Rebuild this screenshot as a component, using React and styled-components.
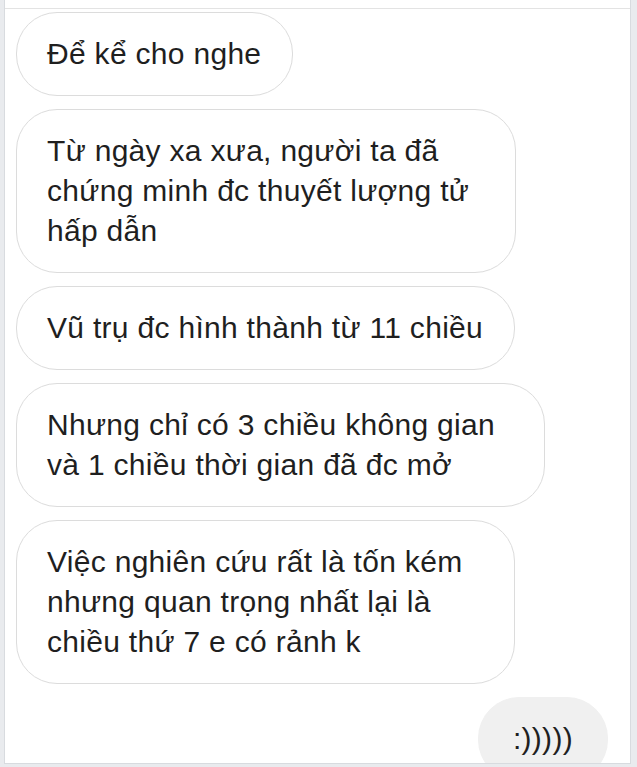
import React from 'react'
import styled, { createGlobalStyle } from 'styled-components'

const GlobalStyle = createGlobalStyle`
  html, body {
    margin: 0;
    padding: 0;
    background: #fff;
  }
  body {
    font-family: "Liberation Sans", Arial, sans-serif;
  }
`

const Frame = styled.div`
  width: 637px;
  height: 767px;
  box-sizing: border-box;
  background: #e9ebee;
  padding: 0 6px 3px 4px;
  display: flex;
  overflow: hidden;
`

const Panel = styled.div`
  flex: 1;
  background: #fff;
  border-left: 1px solid #d8dbdf;
  border-right: 1px solid #d8dbdf;
  border-bottom: 1px solid #d8dbdf;
  display: flex;
  flex-direction: column;
  overflow: hidden;
`

const Header = styled.div`
  height: 8px;
  flex: none;
  border-bottom: 1px solid #e3e3e3;
`

const Thread = styled.div`
  flex: 1;
  display: flex;
  flex-direction: column;
  gap: 13px;
  padding: 3px 22px 0 11px;
`

const Bubble = styled.div`
  align-self: ${props => (props.mine ? 'flex-end' : 'flex-start')};
  width: ${props => (props.width ? `${props.width}px` : 'auto')};
  box-sizing: border-box;
  padding: ${props => (props.mine ? '21px 34px' : '21px 31px 21px 30px')};
  border-radius: 41px;
  border: 1px solid ${props => (props.mine ? '#f0f0f0' : '#dcdcdc')};
  background: ${props => (props.mine ? '#f0f0f0' : '#fff')};
  color: #1f1f1f;
  font-size: 30px;
  letter-spacing: 0.3px;
  line-height: 40px;
  white-space: nowrap;
`

const Line = styled.span`
  display: block;
`

const messages = [
  { lines: ['Để kể cho nghe'] },
  {
    lines: [
      'Từ ngày xa xưa, người ta đã',
      'chứng minh đc thuyết lượng tử',
      'hấp dẫn'
    ],
    width: 500
  },
  { lines: ['Vũ trụ đc hình thành từ 11 chiều'] },
  {
    lines: ['Nhưng chỉ có 3 chiều không gian', 'và 1 chiều thời gian đã đc mở'],
    width: 529
  },
  {
    lines: [
      'Việc nghiên cứu rất là tốn kém',
      'nhưng quan trọng nhất lại là',
      'chiều thứ 7 e có rảnh k'
    ],
    width: 499
  },
  { lines: [':)))))'], mine: true }
]

const App = () => (
  <>
    <GlobalStyle />
    <Frame>
      <Panel>
        <Header />
        <Thread>
          {messages.map((msg, i) => (
            <Bubble key={i} mine={msg.mine} width={msg.width}>
              {msg.lines.map((line, j) => (
                <Line key={j}>{line}</Line>
              ))}
            </Bubble>
          ))}
        </Thread>
      </Panel>
    </Frame>
  </>
)

export default App
